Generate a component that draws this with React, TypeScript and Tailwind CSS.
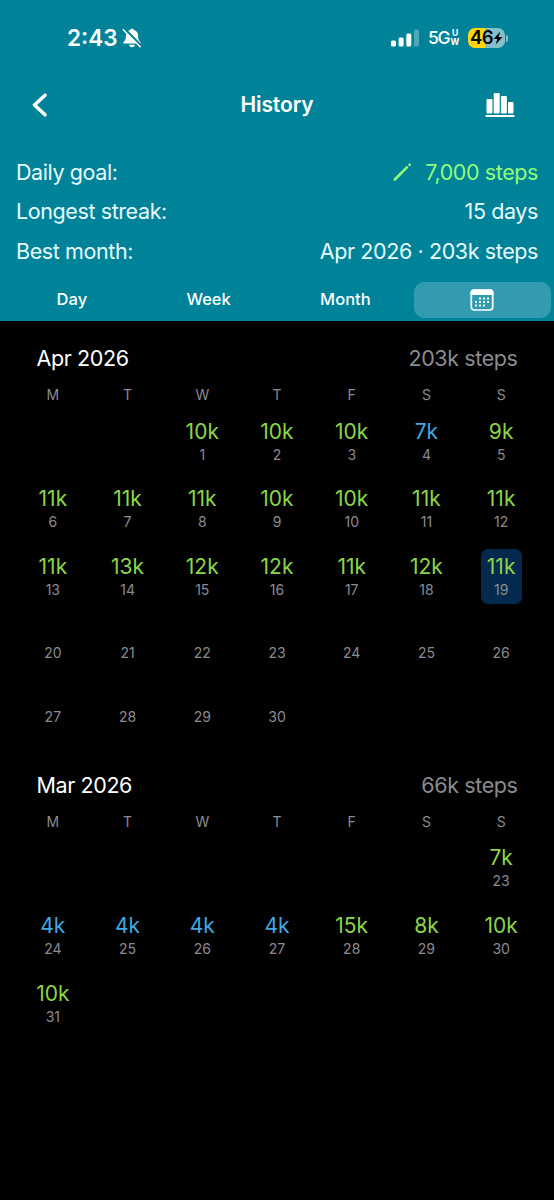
import { clsx } from 'clsx'

type Day = {
  date: number
  steps?: number
  selected?: boolean
}

type MonthData = {
  title: string
  total: string
  offset: number
  days: Day[]
}

const GOAL = 7.5
const WEEKDAYS = ['M', 'T', 'W', 'T', 'F', 'S', 'S']
const TABS = ['Day', 'Week', 'Month']

const APRIL_STEPS = [10, 10, 10, 7, 9, 11, 11, 11, 10, 10, 11, 11, 11, 13, 12, 12, 11, 12, 11]

const MONTHS: MonthData[] = [
  {
    title: 'Apr 2026',
    total: '203k steps',
    offset: 2,
    days: Array.from({ length: 30 }, (_, i) => ({ date: i + 1, steps: APRIL_STEPS[i], selected: i === 18 })),
  },
  {
    title: 'Mar 2026',
    total: '66k steps',
    offset: 6,
    days: [
      { date: 23, steps: 7.6 },
      { date: 24, steps: 4 },
      { date: 25, steps: 4 },
      { date: 26, steps: 4 },
      { date: 27, steps: 4 },
      { date: 28, steps: 15 },
      { date: 29, steps: 8 },
      { date: 30, steps: 10 },
      { date: 31, steps: 10 },
    ],
  },
]

function toWeeks({ offset, days }: MonthData) {
  const cells: (Day | null)[] = [...Array<null>(offset).fill(null), ...days]
  const weeks: (Day | null)[][] = []
  for (let i = 0; i < cells.length; i += 7) weeks.push(cells.slice(i, i + 7))
  return weeks
}

function BellOff() {
  return (
    <svg className="h-[20px] w-[20px]" viewBox="0 0 20 20" fill="none">
      <path d="M10 .8c1 0 1.700.5 1.900 1.200 2.700.7 4.200 2.800 4.200 5.500 0 3.900.7 4.900 2.200 6.200.8.8.4 1.900-.7 1.900H2.400c-1.100 0-1.500-1.100-.7-1.900 1.500-1.300 2.200-2.300 2.200-6.200 0-2.700 1.500-4.800 4.200-5.500C8.300 1.300 9 .8 10 .8Z" fill="white" />
      <path d="M7 16.800h6c-.3 1.500-1.500 2.400-3 2.400s-2.700-.9-3-2.400Z" fill="white" />
      <path d="M2.300 1.200 19.500 18.400" stroke="#008299" strokeWidth="3.200" />
      <path d="M1.200 1.800 18.200 18.800" stroke="white" strokeWidth="1.500" strokeLinecap="round" />
    </svg>
  )
}

function StatusBar() {
  return (
    <div className="flex h-[76px] items-center justify-between pr-[46px] pl-[67px]">
      <div className="flex items-center gap-[4px]">
        <span className="text-[22.500px] font-semibold">2:43</span>
        <BellOff />
      </div>
      <div className="flex items-center">
        <svg className="h-[18px] w-[28px]" viewBox="0 0 28 18" fill="white">
          <rect x="0" y="11.500" width="5" height="6" rx="1.500" />
          <rect x="7.600" y="8.500" width="5" height="9" rx="1.500" />
          <rect x="15.300" y="4.500" width="5" height="13" rx="1.500" />
          <rect x="23" y="0.500" width="5" height="17" rx="1.500" opacity="0.3" />
        </svg>
        <span className="ml-[9px] w-[22px] text-[17.500px] font-medium tracking-[-1.200px]">5G</span>
        <span className="ml-px flex w-[8px] flex-col items-center text-[8.500px] leading-[9px] font-bold">
          <span>U</span>
          <span>W</span>
        </span>
        <div className="ml-[9px] flex h-[20px] w-[37px] items-center justify-center rounded-[7px] bg-[linear-gradient(90deg,#ffd60a_46%,#84c0cc_46%)] text-black">
          <span className="text-[18.500px] font-semibold tracking-[-0.6px]">46</span>
          <svg className="h-[14px] w-[10px]" viewBox="0 0 10 14">
            <path d="M7.300.5.500 7.900h3.800L2.700 13.500 9.500 6H5.600Z" fill="black" />
          </svg>
        </div>
        <span className="ml-px h-[7px] w-[2px] rounded-r-full bg-[#84c0cc]" />
      </div>
    </div>
  )
}

function NavBar() {
  return (
    <div className="grid h-[58px] grid-cols-[1fr_auto_1fr] items-center px-[32px]">
      <svg className="h-[24px] w-[16px]" viewBox="0 0 16 24" fill="none" stroke="white" strokeWidth="3.500" strokeLinecap="round" strokeLinejoin="round">
        <path d="M13 2.200 2.500 12 13 21.800" />
      </svg>
      <h1 className="text-[21px] font-semibold tracking-[-0.100px]">History</h1>
      <svg className="mr-[7px] h-[26px] w-[30px] justify-self-end" viewBox="0 0 30 26" fill="white">
        <rect x="1.500" y="7" width="6" height="14.500" rx="1" />
        <rect x="8.700" y="1" width="6" height="20.500" rx="1" />
        <rect x="15.900" y="4" width="6" height="17.500" rx="1" />
        <rect x="23" y="10" width="5.500" height="11.500" rx="1" />
        <rect x="0.500" y="23" width="29" height="2" rx="0.500" />
      </svg>
    </div>
  )
}

function Stats() {
  return (
    <dl className="mt-[18.500px] px-4 text-[21.500px] leading-[39.500px] tracking-[-0.400px] text-[#e8fbff]">
      <div className="flex justify-between">
        <dt>Daily goal:</dt>
        <dd className="flex items-center gap-[12px] text-[#93fb78]">
          <svg className="h-[20px] w-[20px]" viewBox="0 0 20 20" stroke="currentColor" strokeWidth="2.600" strokeLinecap="round">
            <path d="M1.800 17.500 13.900 5.400M16.500 2.800l.2-.2" />
          </svg>
          7,000 steps
        </dd>
      </div>
      <div className="flex justify-between">
        <dt>Longest streak:</dt>
        <dd>15 days</dd>
      </div>
      <div className="flex justify-between">
        <dt>Best month:</dt>
        <dd>Apr 2026 · 203k steps</dd>
      </div>
    </dl>
  )
}

function CalendarIcon() {
  const dots = [
    [10, 9.500], [14, 9.500], [18, 9.500],
    [6, 13], [10, 13], [14, 13], [18, 13],
    [6, 16.500], [10, 16.500], [14, 16.500],
  ]
  return (
    <svg className="h-[22px] w-[24px]" viewBox="0 0 24 22" fill="white">
      <rect x="1.300" y="1" width="21.400" height="20" rx="3" fill="none" stroke="white" strokeWidth="1.700" />
      <path d="M.5 6V3.500a3 3 0 0 1 3-3h17a3 3 0 0 1 3 3V6Z" />
      {dots.map(([x, y]) => (
        <rect key={`${x}-${y}`} x={x - 1} y={y - 1} width="2" height="2" rx="0.500" />
      ))}
    </svg>
  )
}

function Tabs() {
  return (
    <div className="mt-[10.500px] grid h-[36.500px] grid-cols-4 pr-[3.500px] pl-[3.500px]">
      {TABS.map((tab) => (
        <button key={tab} className="text-[16.500px] font-medium">
          {tab}
        </button>
      ))}
      <button className="flex items-center justify-center rounded-[10px] bg-[#339baf]" aria-label="Calendar">
        <CalendarIcon />
      </button>
    </div>
  )
}

function DayCell({ day }: { day: Day | null }) {
  if (!day) return <div />

  if (day.steps === undefined) {
    return <div className="h-[64.500px] pt-[32px] text-center text-[14px] leading-[20px] text-[#8b8b90]">{day.date}</div>
  }

  return (
    <div className="flex h-[67.800px] items-center justify-center">
      <div className={clsx('flex h-[55px] w-[41px] flex-col items-center rounded-[7px] pt-[5px]', day.selected && 'bg-[#03294f]')}>
        <span className={clsx('text-[21px] leading-[26px]', day.steps >= GOAL ? 'text-[#8bd546]' : 'text-[#3fa9e0]')}>{Math.floor(day.steps)}k</span>
        <span className="text-[14px] leading-[20px] text-[#8b8b90]">{day.date}</span>
      </div>
    </div>
  )
}

function MonthSection({ month }: { month: MonthData }) {
  return (
    <section className="mb-[8px] px-[15.500px] pt-[21px]">
      <div className="flex items-center justify-between px-[21px] text-[21.500px] leading-[32px] tracking-[-0.400px]">
        <h2>{month.title}</h2>
        <span className="text-[#8b8b90]">{month.total}</span>
      </div>
      <div className="grid h-[33.300px] grid-cols-7 pt-[11px] text-center text-[14px] leading-[20px] text-[#8b8b90]">
        {WEEKDAYS.map((label, i) => (
          <span key={i}>{label}</span>
        ))}
      </div>
      {toWeeks(month).map((week, i) => (
        <div key={i} className="grid grid-cols-7">
          {week.map((day, j) => (
            <DayCell key={j} day={day} />
          ))}
        </div>
      ))}
    </section>
  )
}

export default function App() {
  return (
    <div className="h-[1200px] w-[554px] overflow-hidden bg-black font-['Inter',sans-serif] text-white">
      <header className="h-[321px] bg-[#008299]">
        <StatusBar />
        <NavBar />
        <Stats />
        <Tabs />
      </header>
      <main>
        {MONTHS.map((month) => (
          <MonthSection key={month.title} month={month} />
        ))}
      </main>
    </div>
  )
}
